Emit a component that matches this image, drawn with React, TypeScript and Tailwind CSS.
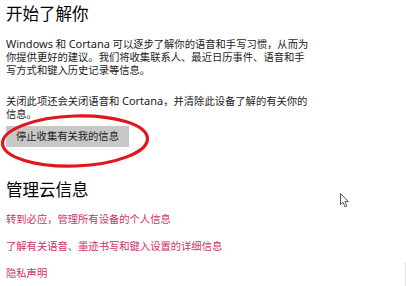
const cjk = { fontFamily: '"Noto Sans", "Noto Sans CJK SC", sans-serif' };

function Lat({ children }: { children: React.ReactNode }) {
  return <span className="text-[11px] leading-[13px]">{children}</span>;
}

export default function App() {
  return (
    <div
      className="relative h-[286px] w-[406px] overflow-hidden bg-white pl-[6px] text-[#1b1b1b]"
      style={cjk}
    >
      {/* 开始了解你 */}
      <h1 className="pt-[4px] text-[16.5px] leading-[20px] font-normal text-black">开始了解你</h1>

      <div className="mt-[13px] text-[10.3px] leading-[13px]">
        <div className="whitespace-nowrap">
          <Lat>Windows</Lat> 和 <Lat>Cortana</Lat> 可以逐步了解你的语音和手写习惯，从而为
        </div>
        <div className="whitespace-nowrap">你提供更好的建议。我们将收集联系人、最近日历事件、语音和手</div>
        <div className="whitespace-nowrap">写方式和键入历史记录等信息。</div>
      </div>

      <div className="mt-[17px] text-[10.3px] leading-[13px]">
        <div className="whitespace-nowrap">
          关闭此项还会关闭语音和 <Lat>Cortana</Lat>，并清除此设备了解的有关你的
        </div>
        <div className="whitespace-nowrap">信息。</div>
      </div>

      <button
        type="button"
        className="mt-[5px] flex h-[21px] items-center bg-[#c8c8c8] px-[10px] text-[10.3px] leading-[13px] text-[#1b1b1b]"
      >
        停止收集有关我的信息
      </button>

      {/* 管理云信息 */}
      <h2 className="mt-[33px] text-[16.5px] leading-[20px] font-normal text-black">管理云信息</h2>

      <div className="flex flex-col gap-[14px] pt-[13px] text-[10.3px] leading-[13px] text-[#cf3169]">
        <a className="whitespace-nowrap">转到必应，管理所有设备的个人信息</a>
        <a className="whitespace-nowrap">了解有关语音、墨迹书写和键入设置的详细信息</a>
        <a className="whitespace-nowrap">隐私声明</a>
      </div>

      {/* red hand-drawn circle round the button */}
      <svg
        className="pointer-events-none absolute left-0 top-[112px]"
        width="154"
        height="60"
        viewBox="0 0 154 60"
      >
        <ellipse
          cx="75"
          cy="29"
          rx="72.5"
          ry="25"
          transform="rotate(-2 75 29)"
          fill="none"
          stroke="#e2141c"
          strokeWidth="3.2"
        />
      </svg>

      {/* mouse cursor */}
      <svg
        className="pointer-events-none absolute left-[340px] top-[193px]"
        width="10"
        height="15"
        viewBox="0 0 10 15"
      >
        <path
          d="M0.5 0.5 L0.5 11.5 L3 9.2 L5 13.8 L6.8 13 L4.9 8.6 L8.3 8.6 Z"
          fill="#fff"
          stroke="#444"
          strokeWidth="0.9"
          strokeLinejoin="round"
        />
      </svg>

      <div className="absolute right-0 top-[262px] h-[24px] w-px bg-[#e6e6e6]" />
    </div>
  );
}
